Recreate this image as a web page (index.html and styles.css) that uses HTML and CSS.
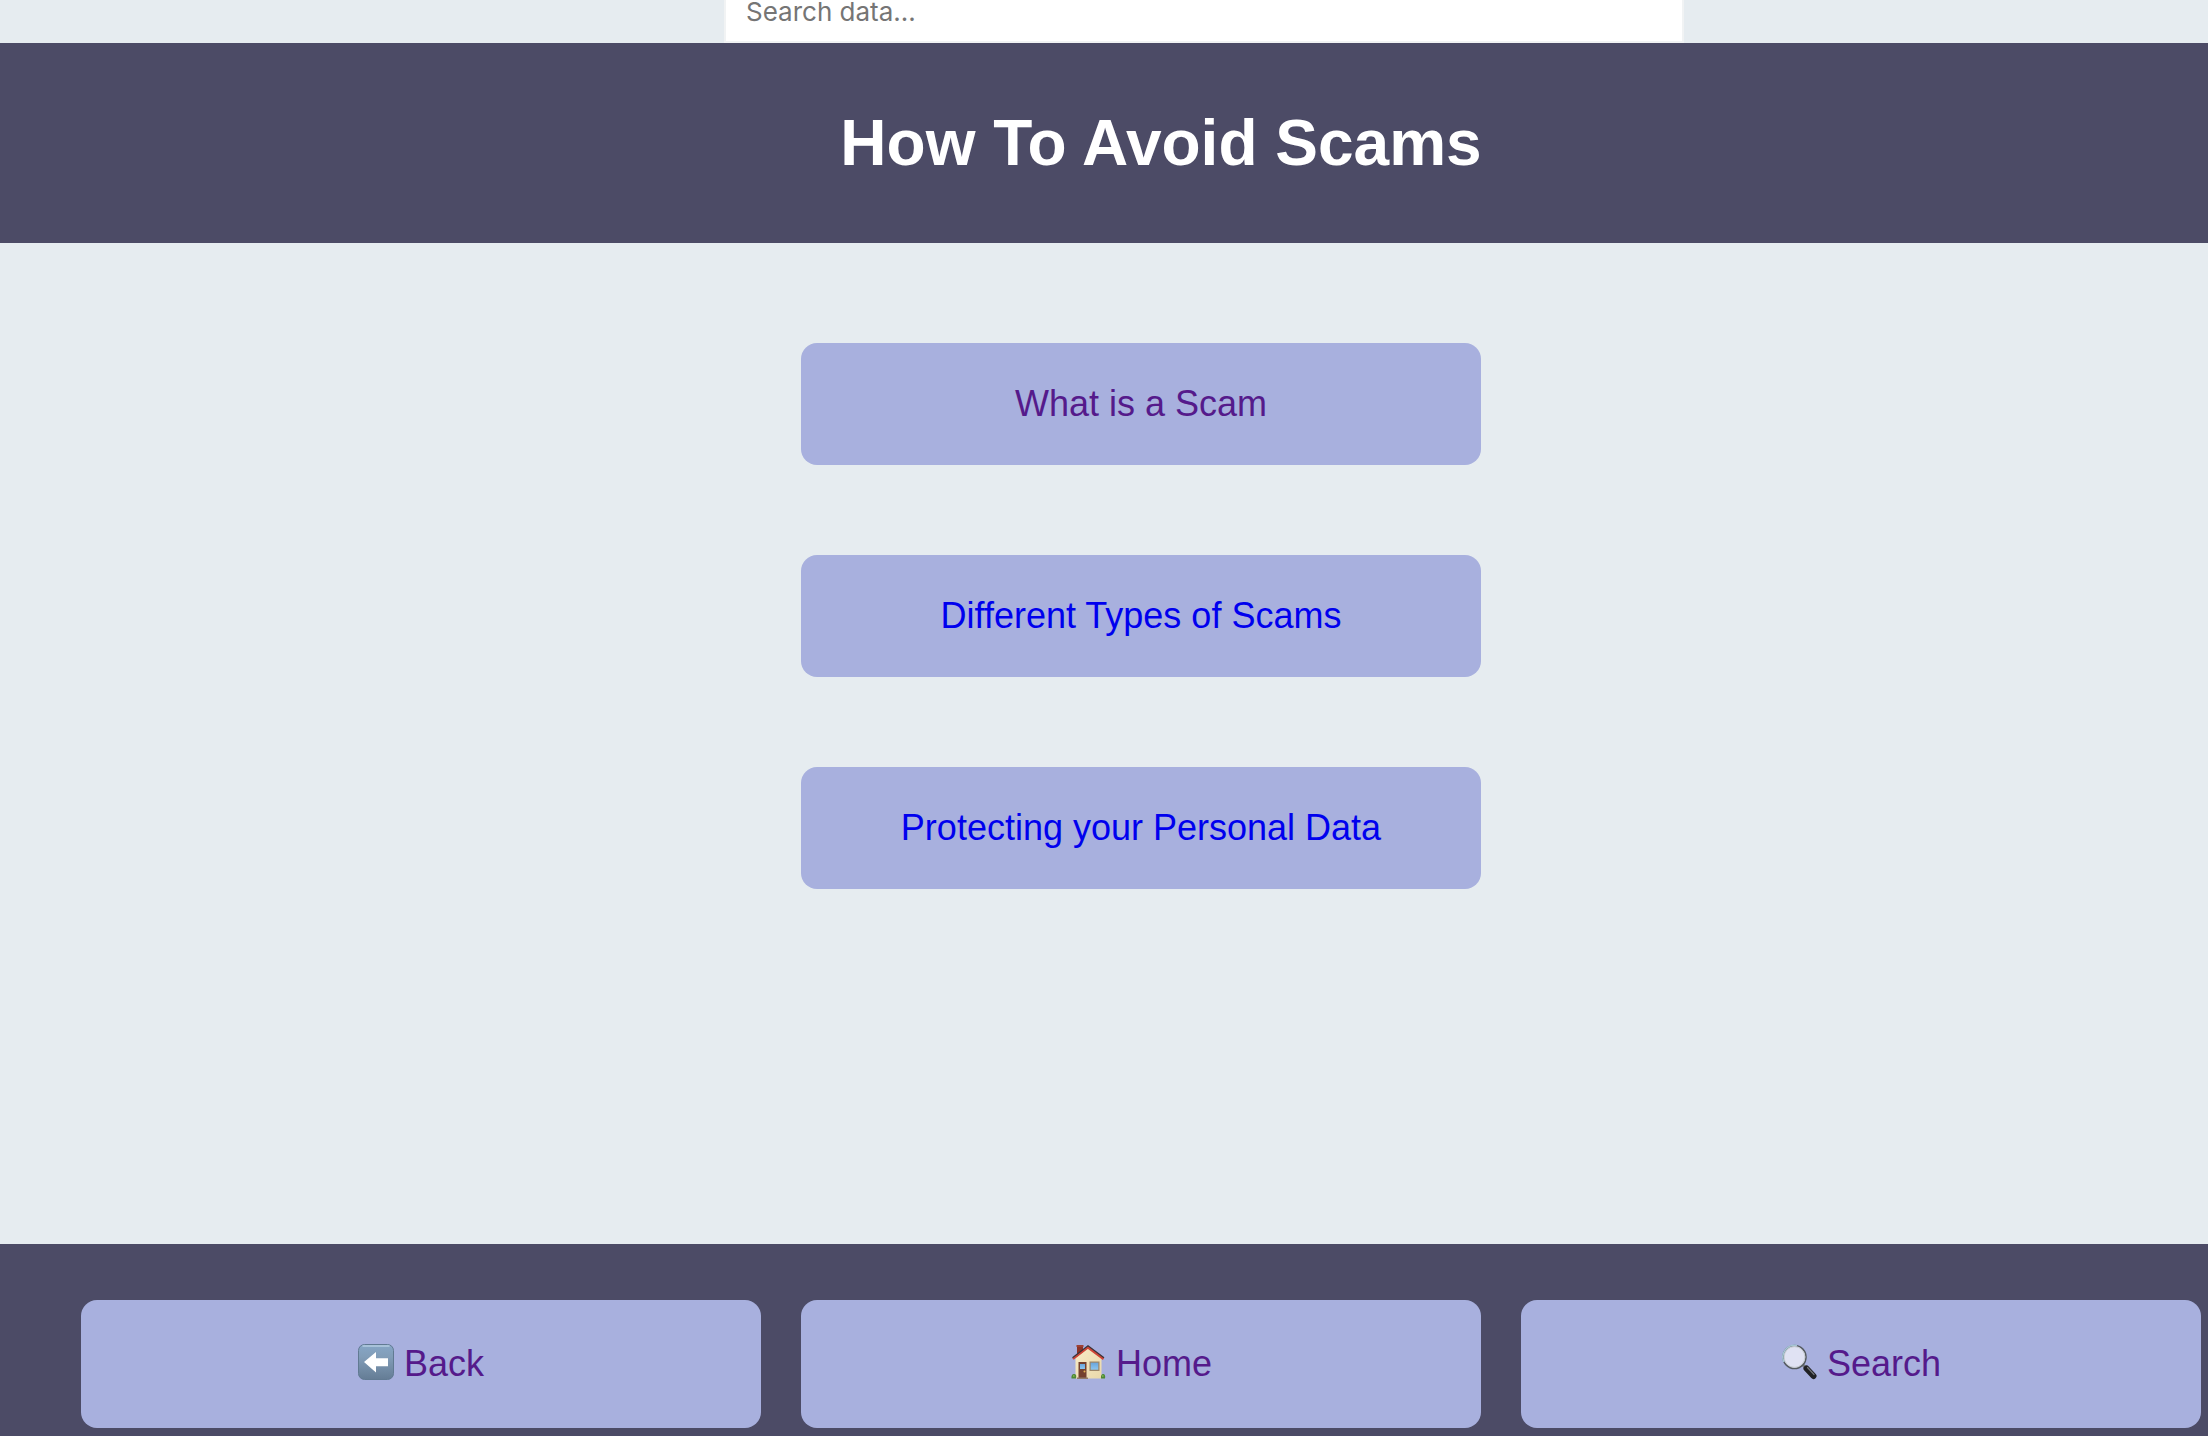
FILE: index.html
```html
<!DOCTYPE html>
<html lang="en">
<head>
<meta charset="utf-8">
<title>How To Avoid Scams</title>
<link rel="stylesheet" href="styles.css">
</head>
<body class="page">
<form class="search" role="search">
  <input class="search-input" type="search" placeholder="Search data..." aria-label="Search data">
</form>
<header class="banner">
  <h1 class="banner-title">How To Avoid Scams</h1>
</header>
<main class="topics">
  <a class="button visited" href="#what">What is a Scam</a>
  <a class="button" href="#types">Different Types of Scams</a>
  <a class="button" href="#data">Protecting your Personal Data</a>
</main>
<nav class="footer" aria-label="Page">
  <a class="button tall visited" href="#back">
    <svg class="icon" viewBox="0 0 36 36" aria-hidden="true">
      <defs>
        <linearGradient id="key" x1="0" y1="0" x2="0" y2="1">
          <stop offset="0" stop-color="#86a6c6"/><stop offset=".35" stop-color="#829db8"/><stop offset="1" stop-color="#647c95"/>
        </linearGradient>
      </defs>
      <rect x=".5" y=".5" width="35" height="35" rx="6" fill="url(#key)" stroke="#617a92"/>
      <path d="M5 2H31" stroke="#b4cbdf" stroke-width="1.5" stroke-linecap="round"/>
      <path d="M6 18 18 8v6.200H30v8H18V28.500Z" fill="#fff"/>
    </svg>
    <span>Back</span>
  </a>
  <a class="button tall visited" href="#home">
    <svg class="icon" viewBox="0 0 36 36" aria-hidden="true">
      <defs>
        <linearGradient id="wall" x1="0" y1="0" x2="1" y2="1">
          <stop offset="0" stop-color="#f8ebc6"/><stop offset="1" stop-color="#ead8ab"/>
        </linearGradient>
        <linearGradient id="glass" x1="0" y1="0" x2="0" y2="1">
          <stop offset="0" stop-color="#6aa5dc"/><stop offset="1" stop-color="#8cc5ef"/>
        </linearGradient>
      </defs>
      <path d="M7 2h6v6l-6 5Z" fill="#8c3328"/>
      <path d="M6.500 1h7v2h-7Z" fill="#9d4034"/>
      <path d="M5.500 14 18 4 31.500 14V34.500H5.500Z" fill="url(#wall)"/>
      <path d="M3 15 18 3.500 33.500 15" fill="none" stroke="#cf4537" stroke-width="2.200"/>
      <path d="M2.500 13.800 18 1.800 34 13.800" fill="none" stroke="#3b3236" stroke-width="1.300"/>
      <path d="M8.500 18H16.500V34H8.500Z" fill="#75412e"/>
      <path d="M10 20h5v5h-5Z" fill="url(#glass)"/>
      <circle cx="14.500" cy="27.500" r="1" fill="#e4b352"/>
      <path d="M19.500 17.500h10v9.500h-10Z" fill="#9c8567"/>
      <path d="M20.700 18.700h7.600v7h-7.600Z" fill="url(#glass)"/>
      <path d="M7 33.500H18v1.500H7Z" fill="#927b68"/>
      <path d="M1.500 34.500c-.5-3 1-5 3-4.500S6.500 32 6 34.500ZM31 34.500c-.5-3 1-5 2.500-4.500S35.500 32 35 34.500Z" fill="#4d8a35"/>
      <path d="M3 32h1.500M32 32H33.500" stroke="#82b654" stroke-width="1.500"/>
    </svg>
    <span>Home</span>
  </a>
  <a class="button tall visited" href="#search">
    <svg class="icon" viewBox="0 0 36 36" aria-hidden="true">
      <path d="M21 20 25 24" stroke="#777b80" stroke-width="3"/>
      <path d="M25.500 24.500 32.500 32" stroke="#202124" stroke-width="6" stroke-linecap="round"/>
      <path d="M26.500 23.500 33 30.500" stroke="#73767a" stroke-width="1.200" stroke-linecap="round"/>
      <circle cx="13.500" cy="13" r="11.500" fill="#e0e2f3" stroke="#555b61" stroke-width="1.600"/>
      <circle cx="13.500" cy="13" r="10.400" fill="none" stroke="#c6cbd0"/>
      <path d="M3 18A11.700 11.700 0 0 1 16 1.500" fill="none" stroke="#a6c5d4" stroke-width="1.500"/>
    </svg>
    <span>Search</span>
  </a>
</nav>
</body>
</html>
```
FILE: styles.css
```css
* {
  box-sizing: border-box;
}

.page {
  display: flex;
  flex-direction: column;
  min-height: 100vh;
  margin: 0;
  background: #e6ecf0;
  font-family: "Liberation Sans", Arial, sans-serif;
  font-size: 36px;
}

/* Search bar, tucked under the top edge of the window */
.search {
  display: flex;
  justify-content: center;
  align-items: flex-end;
  height: 43px;
  padding-left: 200px;
  overflow: hidden;
}

.search-input {
  flex: none;
  width: 960px;
  max-width: 100%;
  height: 64px;
  padding: 0 20px;
  border: 2px solid #f1f3f4;
  border-radius: 0;
  background: #fff;
  font-family: Inter, sans-serif;
  font-size: 26px;
  appearance: none;
}

.search-input::placeholder {
  color: #757575;
}

.banner {
  display: flex;
  justify-content: center;
  padding: 64px 0 64px 114px;
  background: #4c4b66;
  color: #fff;
}

.banner-title {
  margin: 0;
  font-size: 64px;
  line-height: 72px;
}

/* Topics share the three-column grid of the footer and sit in the middle one */
.topics,
.footer {
  display: grid;
  grid-template-columns: repeat(3, 1fr);
  padding-left: 81px;
  padding-right: 7px;
  column-gap: 40px;
}

.topics {
  flex: 1;
  align-content: start;
  row-gap: 90px;
  padding-top: 100px;
  padding-bottom: 100px;
}

.topics .button {
  grid-column: 2;
}

.button {
  display: flex;
  justify-content: center;
  align-items: center;
  gap: 10px;
  padding: 40px 20px;
  border-radius: 16px;
  background: #a8b0de;
  color: #0000ee;
  line-height: 42px;
  text-decoration: none;
}

.tall {
  padding-top: 43px;
  padding-bottom: 43px;
}

.visited {
  color: #551a8b;
}

.footer {
  padding-top: 56px;
  padding-bottom: 8px;
  background: #4c4b66;
}

.icon {
  width: 36px;
  height: 36px;
  margin-bottom: 4px;
}
```
